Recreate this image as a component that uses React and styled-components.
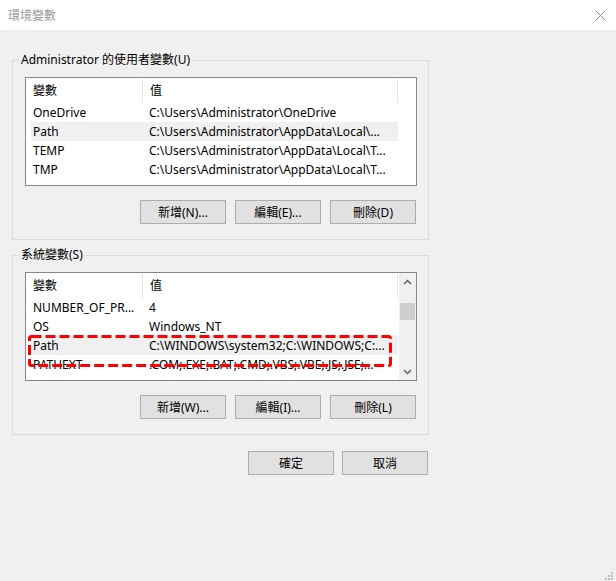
import React from "react";
import styled, { createGlobalStyle } from "styled-components";

const GlobalStyle = createGlobalStyle`
  html, body {
    margin: 0;
    padding: 0;
    background: #f0f0f0;
  }
  body {
    font-family: "Segoe UI", "Noto Sans", "Noto Sans CJK TC", sans-serif;
    font-size: 12px;
    color: #000;
  }
`;

const Window = styled.div`
  width: 616px;
  height: 581px;
  display: flex;
  flex-direction: column;
  background: #f0f0f0;
  overflow: hidden;
`;

const TitleBar = styled.div`
  height: 30px;
  flex: none;
  display: flex;
  align-items: center;
  justify-content: space-between;
  padding: 0 10px 0 8px;
  background: #fff;
`;

const Title = styled.span`
  font-size: 12px;
  color: #999;
`;

const Group = styled.fieldset`
  margin: ${(p) => p.$top}px 0 0 12px;
  width: 417px;
  box-sizing: border-box;
  border: 1px solid #dcdcdc;
  padding: 0 0 15px;
  min-inline-size: 0;
`;

const Legend = styled.legend`
  margin-left: 6px;
  padding: 0 2px;
  font-size: 12px;
  line-height: 16px;
  color: #000;
`;

const ListBox = styled.div`
  position: relative;
  margin: 9px 11px 0 12px;
  height: 109px;
  box-sizing: border-box;
  border: 1px solid #828790;
  background: #fff;
  display: flex;
  overflow: hidden;
`;

const ListMain = styled.div`
  flex: 1;
  min-width: 0;
`;

const Header = styled.div`
  display: flex;
  height: 25px;
`;

const HeaderCell = styled.div`
  width: ${(p) => p.$w}px;
  box-sizing: border-box;
  padding-left: 7px;
  line-height: 24px;
  margin-top: 1px;
  border-right: 1px solid #e5e5e5;
`;

const Row = styled.div`
  display: flex;
  margin-left: 5px;
  width: 367px;
  height: 19px;
  line-height: 19px;
  background: ${(p) => (p.$selected ? "#f0f0f0" : "transparent")};
  white-space: nowrap;
`;

const NameCell = styled.div`
  width: 111px;
  padding-left: 2px;
  box-sizing: border-box;
  overflow: hidden;
`;

const ValueCell = styled.div`
  flex: 1;
  padding-left: 7px;
  overflow: hidden;
`;

const Scrollbar = styled.div`
  width: 17px;
  flex: none;
  background: #f0f0f0;
  display: flex;
  flex-direction: column;
`;

const ArrowBtn = styled.div`
  height: 17px;
  display: flex;
  align-items: center;
  justify-content: center;
`;

const Track = styled.div`
  flex: 1;
`;

const Thumb = styled.div`
  margin: 13px 1px 0;
  height: 17px;
  background: #cdcdcd;
`;

const Marker = styled.svg`
  position: absolute;
  left: 2px;
  top: 62px;
  pointer-events: none;
`;

const ButtonRow = styled.div`
  display: flex;
  justify-content: flex-end;
  gap: ${(p) => p.$gap || 9}px;
  margin: ${(p) => p.$margin};
`;

const Button = styled.button`
  width: 86px;
  height: 24px;
  box-sizing: border-box;
  padding: 0;
  border: 1px solid #adadad;
  background: #e1e1e1;
  font-family: inherit;
  font-size: 12px;
  color: #000;
`;

const Footer = styled.div`
  width: 428px;
  display: flex;
  justify-content: flex-end;
  gap: 8px;
  margin-top: 16px;
`;

const GripRow = styled.div`
  margin-top: auto;
  display: flex;
  justify-content: flex-end;
  padding: 0 3px 1px 0;
`;

const userVars = [
  { name: "OneDrive", value: "C:\\Users\\Administrator\\OneDrive" },
  { name: "Path", value: "C:\\Users\\Administrator\\AppData\\Local\\...", selected: true },
  { name: "TEMP", value: "C:\\Users\\Administrator\\AppData\\Local\\T..." },
  { name: "TMP", value: "C:\\Users\\Administrator\\AppData\\Local\\T..." },
];

const systemVars = [
  { name: "NUMBER_OF_PR...", value: "4" },
  { name: "OS", value: "Windows_NT" },
  { name: "Path", value: "C:\\WINDOWS\\system32;C:\\WINDOWS;C:...", selected: true },
  { name: "PATHEXT", value: ".COM;.EXE;.BAT;.CMD;.VBS;.VBE;.JS;.JSE;..." },
];

const Chevron = ({ down }) => (
  <svg width="9" height="6" viewBox="0 0 9 6">
    <path
      d={down ? "M1 1 L4.5 4.5 L8 1" : "M1 5 L4.5 1.5 L8 5"}
      fill="none"
      stroke="#606060"
      strokeWidth="1.5"
    />
  </svg>
);

const VarList = ({ items, scroll, children }) => (
  <ListBox>
    <ListMain>
      <Header>
        <HeaderCell $w={117}>變數</HeaderCell>
        <HeaderCell $w={255}>值</HeaderCell>
      </Header>
      {items.map((item) => (
        <Row key={item.name} $selected={item.selected}>
          <NameCell>{item.name}</NameCell>
          <ValueCell>{item.value}</ValueCell>
        </Row>
      ))}
    </ListMain>
    {scroll && (
      <Scrollbar>
        <ArrowBtn>
          <Chevron />
        </ArrowBtn>
        <Track>
          <Thumb />
        </Track>
        <ArrowBtn>
          <Chevron down />
        </ArrowBtn>
      </Scrollbar>
    )}
    {children}
  </ListBox>
);

export default function App() {
  return (
    <Window>
      <GlobalStyle />
      <TitleBar>
        <Title>環境變數</Title>
        <svg width="11" height="11" viewBox="0 0 11 11">
          <path d="M0.5 0.5 L10.5 10.5 M10.5 0.5 L0.5 10.5" stroke="#8a8a8a" strokeWidth="1" />
        </svg>
      </TitleBar>

      <Group $top={22}>
        <Legend>Administrator 的使用者變數(U)</Legend>
        <VarList items={userVars} />
        <ButtonRow $margin="14px 12px 0 0">
          <Button>新增(N)...</Button>
          <Button>編輯(E)...</Button>
          <Button>刪除(D)</Button>
        </ButtonRow>
      </Group>

      <Group $top={7}>
        <Legend>系統變數(S)</Legend>
        <VarList items={systemVars} scroll>
          <Marker width="366" height="34" viewBox="0 0 366 34">
            <rect
              x="1.5"
              y="1.5"
              width="361"
              height="29"
              rx="2"
              fill="none"
              stroke="#f00"
              strokeWidth="3"
              strokeDasharray="10 4"
            />
          </Marker>
        </VarList>
        <ButtonRow $margin="14px 12px 0 0">
          <Button>新增(W)...</Button>
          <Button>編輯(I)...</Button>
          <Button>刪除(L)</Button>
        </ButtonRow>
      </Group>

      <Footer>
        <Button>確定</Button>
        <Button>取消</Button>
      </Footer>

      <GripRow>
        <svg width="8" height="8" viewBox="0 0 8 8">
          <g fill="#bcbcbc">
            <rect x="6" y="0" width="2" height="2" />
            <rect x="3" y="3" width="2" height="2" />
            <rect x="6" y="3" width="2" height="2" />
            <rect x="0" y="6" width="2" height="2" />
            <rect x="3" y="6" width="2" height="2" />
            <rect x="6" y="6" width="2" height="2" />
          </g>
        </svg>
      </GripRow>
    </Window>
  );
}
